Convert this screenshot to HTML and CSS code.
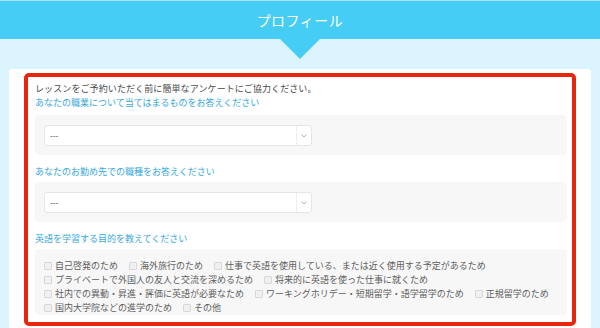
FILE: index.html
```html
<!DOCTYPE html>
<html lang="ja">
<head>
    <meta charset="UTF-8">
    <meta name="viewport" content="width=device-width, initial-scale=1.0">
    <title>プロフィール</title>
    <link rel="stylesheet" href="styles.css">
</head>
<body>
    <header class="page-head">
        <h1>プロフィール</h1>
    </header>

    <div class="card">
        <form class="survey">
            <p class="intro">レッスンをご予約いただく前に簡単なアンケートにご協力ください。</p>

            <p class="question">あなたの職業について当てはまるものをお答えください</p>
            <div class="field">
                <div class="select">
                    <span>---</span>
                    <span class="arrow">
                        <svg width="6" height="4" viewBox="0 0 6 4"><path d="M0.5 0.5 L3 3 L5.5 0.5" fill="none" stroke="#aaa" stroke-width="0.9"/></svg>
                    </span>
                </div>
            </div>

            <p class="question q-gap">あなたのお勤め先での職種をお答えください</p>
            <div class="field">
                <div class="select">
                    <span>---</span>
                    <span class="arrow">
                        <svg width="6" height="4" viewBox="0 0 6 4"><path d="M0.5 0.5 L3 3 L5.5 0.5" fill="none" stroke="#aaa" stroke-width="0.9"/></svg>
                    </span>
                </div>
            </div>

            <p class="question q-gap">英語を学習する目的を教えてください</p>
            <div class="field checks">
                <label class="check"><span class="box"></span>自己啓発のため</label>
                <label class="check"><span class="box"></span>海外旅行のため</label>
                <label class="check"><span class="box"></span>仕事で英語を使用している、または近く使用する予定があるため</label>
                <label class="check"><span class="box"></span>プライベートで外国人の友人と交流を深めるため</label>
                <label class="check"><span class="box"></span>将来的に英語を使った仕事に就くため</label>
                <label class="check"><span class="box"></span>社内での異動・昇進・評価に英語が必要なため</label>
                <label class="check"><span class="box"></span>ワーキングホリデー・短期留学・語学留学のため</label>
                <label class="check"><span class="box"></span>正規留学のため</label>
                <label class="check"><span class="box"></span>国内大学院などの進学のため</label>
                <label class="check"><span class="box"></span>その他</label>
            </div>
        </form>
    </div>
</body>
</html>
```

FILE: styles.css
```css
body {
    font-family: "Noto Sans CJK JP", "Noto Sans", sans-serif;
    margin: 0;
    padding: 0;
    background-color: #dcf4fd;
}

.page-head {
    position: relative;
    background-color: #45cdf5;
    border-top: 1px solid #a9e4f6;
    height: 38px;
    margin-bottom: 30px;
}

.page-head h1 {
    margin: 0;
    color: white;
    font-size: 14px;
    font-weight: normal;
    line-height: 38px;
    text-align: center;
    letter-spacing: 0.5px;
}

/* arrow under the header */
.page-head::after {
    content: "";
    position: absolute;
    left: 280px;
    top: 38px;
    border-left: 20px solid transparent;
    border-right: 20px solid transparent;
    border-top: 20px solid #45cdf5;
}

.card {
    background-color: white;
    margin: 0 9px;
    padding: 4px 15px 2px;
    border-radius: 3px 3px 0 0;
}

.survey {
    border: 4px solid #e8260d;
    border-radius: 5px;
    padding: 5px 5px 7px 7px;
}

.survey p {
    margin: 0;
    font-size: 9px;
    line-height: 14px;
}

.intro {
    color: #4a4a4a;
    letter-spacing: 0.1px;
}

.question {
    color: #36a8dd;
}

.q-gap {
    margin-top: 10px !important;
}

.field {
    background-color: #f7f7f7;
    border-radius: 4px;
    padding: 10px 9px 9px;
    margin-top: 5px;
}

.q-gap + .field {
    margin-top: 3px;
}

.select {
    display: flex;
    justify-content: space-between;
    align-items: center;
    width: 268px;
    height: 21px;
    box-sizing: border-box;
    background-color: white;
    border: 1px solid #e6e6e6;
    border-radius: 3px;
    padding-left: 5px;
    font-size: 8px;
    color: #333;
}

.select .arrow {
    display: flex;
    align-items: center;
    justify-content: center;
    width: 14px;
    height: 100%;
    border-left: 1px solid #eee;
}

.checks {
    display: flex;
    flex-wrap: wrap;
    column-gap: 11px;
    padding: 10px 9px 0;
    height: 56px;
}

.check {
    display: flex;
    align-items: center;
    font-size: 9px;
    line-height: 14px;
    color: #5e5e5e;
    white-space: nowrap;
}

.check .box {
    width: 6px;
    height: 6px;
    border: 1px solid #d8d8d8;
    background-color: #f0f0f0;
    border-radius: 1px;
    margin-right: 3px;
}
```
